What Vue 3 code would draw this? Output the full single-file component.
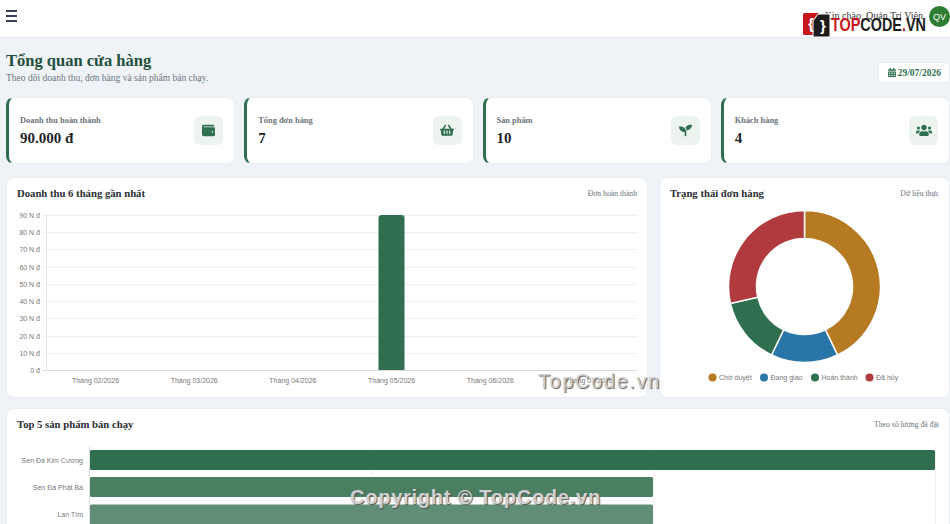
<template>
  <div class="app">
    <header class="topbar">
      <button class="menu-btn" aria-label="Menu">
        <span></span><span></span><span></span>
      </button>
      <div class="user">
        <span class="greeting">Xin chào, Quản Trị Viên</span>
        <span class="avatar">QV</span>
      </div>
    </header>

    <main class="content">
      <div class="page-head">
        <div>
          <h1>Tổng quan cửa hàng</h1>
          <p>Theo dõi doanh thu, đơn hàng và sản phẩm bán chạy.</p>
        </div>
        <div class="date-badge">
          <svg viewBox="0 0 448 512" class="date-icon"><path :d="icons.calendar" /></svg>
          29/07/2026
        </div>
      </div>

      <section class="stats">
        <div v-for="stat in stats" :key="stat.label" class="stat-card">
          <div>
            <div class="stat-label">{{ stat.label }}</div>
            <div class="stat-value">{{ stat.value }}</div>
          </div>
          <div class="stat-icon">
            <svg :viewBox="stat.box" :width="stat.size"><path :d="stat.icon" /></svg>
          </div>
        </div>
      </section>

      <section class="charts">
        <div class="card">
          <div class="card-head">
            <h2>Doanh thu 6 tháng gần nhất</h2>
            <span>Đơn hoàn thành</span>
          </div>
          <svg class="chart" viewBox="6 205 642 193" width="642" height="193">
            <g v-for="(tick, i) in revenueTicks" :key="tick">
              <line x1="42" x2="637" :y1="tickY(i)" :y2="tickY(i)" :stroke="i === 0 ? '#dcdcdc' : '#f0f0f0'" />
              <text x="40" :y="tickY(i) + 2.5" text-anchor="end" class="axis">{{ tick }}</text>
            </g>
            <line x1="46.5" x2="46.5" y1="215" y2="370" stroke="#e6e6e6" />
            <path d="M378.5 370V218a3 3 0 0 1 3-3h20a3 3 0 0 1 3 3v152z" fill="#2f6f4f" />
            <text v-for="(m, i) in months" :key="m" :x="95.5 + i * 98.7" y="383" text-anchor="middle" class="axis">{{ m }}</text>
          </svg>
        </div>

        <div class="card">
          <div class="card-head">
            <h2>Trạng thái đơn hàng</h2>
            <span>Dữ liệu thực</span>
          </div>
          <svg class="chart" viewBox="659 205 291 193" width="291" height="193">
            <path v-for="s in donut" :key="s.label" :d="s.path" :fill="s.color" stroke="#fff" stroke-width="1.5" />
            <g v-for="s in donut" :key="s.label + '-l'">
              <circle :cx="s.dot" cy="377.5" r="4" :fill="s.color" />
              <text :x="s.dot + 6.5" y="380" class="axis">{{ s.label }}</text>
            </g>
          </svg>
        </div>
      </section>

      <section class="card">
        <div class="card-head">
          <h2>Top 5 sản phẩm bán chạy</h2>
          <span>Theo số lượng đã đặt</span>
        </div>
        <svg class="chart" viewBox="6 437 944 120" width="944" height="120">
          <line v-for="x in [371.5, 653.5, 935.5]" :key="x" :x1="x" :x2="x" y1="447" y2="557" stroke="#f0f0f0" />
          <line x1="89.5" x2="89.5" y1="447" y2="557" stroke="#dfdfdf" />
          <g v-for="p in products" :key="p.name">
            <rect x="90" :y="p.y" :width="p.width" height="20" rx="1.5" :fill="p.color" />
            <text x="83" :y="p.y + 12.5" text-anchor="end" class="axis">{{ p.name }}</text>
          </g>
        </svg>
      </section>
    </main>

    <!-- site watermarks sitting on top of the screenshot -->
    <div class="logo">
      <svg class="logo-mark" viewBox="0 0 28 26" width="28" height="26">
        <rect x="0" y="1" width="16" height="22" rx="1.5" fill="#c8161d" />
        <polygon points="15,2 27,2 27,25 10,25 10,9" fill="#1c1c1c" stroke="#fff" stroke-width="1" />
        <text x="8" y="17" text-anchor="middle" class="logo-glyph">{</text>
        <text x="20" y="19" text-anchor="middle" class="logo-glyph">}</text>
      </svg>
      <div class="logo-text"><b>TOP</b>CODE<b>.</b>VN</div>
    </div>
    <div class="mark mark-site">TopCode.vn</div>
    <div class="mark mark-copy">Copyright © TopCode.vn</div>
  </div>
</template>

<script setup>
const icons = {
  calendar: 'M0 464c0 26.5 21.5 48 48 48h352c26.5 0 48-21.5 48-48V192H0v272zm320-196c0-6.6 5.4-12 12-12h40c6.6 0 12 5.4 12 12v40c0 6.6-5.4 12-12 12h-40c-6.6 0-12-5.4-12-12v-40zm0 128c0-6.6 5.4-12 12-12h40c6.6 0 12 5.4 12 12v40c0 6.6-5.4 12-12 12h-40c-6.6 0-12-5.4-12-12v-40zM192 268c0-6.6 5.4-12 12-12h40c6.6 0 12 5.4 12 12v40c0 6.6-5.4 12-12 12h-40c-6.6 0-12-5.4-12-12v-40zm0 128c0-6.6 5.4-12 12-12h40c6.6 0 12 5.4 12 12v40c0 6.6-5.4 12-12 12h-40c-6.6 0-12-5.4-12-12v-40zM64 268c0-6.6 5.4-12 12-12h40c6.6 0 12 5.4 12 12v40c0 6.6-5.4 12-12 12H76c-6.6 0-12-5.4-12-12v-40zm0 128c0-6.6 5.4-12 12-12h40c6.6 0 12 5.4 12 12v40c0 6.6-5.4 12-12 12H76c-6.6 0-12-5.4-12-12v-40zM400 64h-48V16c0-8.8-7.2-16-16-16h-32c-8.8 0-16 7.2-16 16v48H160V16c0-8.8-7.2-16-16-16h-32c-8.8 0-16 7.2-16 16v48H48C21.5 64 0 85.5 0 112v48h448v-48c0-26.5-21.5-48-48-48z',
  wallet: 'M461.2 128H80c-8.84 0-16-7.16-16-16s7.16-16 16-16h384c8.84 0 16-7.16 16-16 0-26.51-21.49-48-48-48H64C28.65 32 0 60.65 0 96v320c0 35.35 28.65 64 64 64h397.2c28.02 0 50.8-21.53 50.8-48V176c0-26.47-22.78-48-50.8-48zM416 340c-17.67 0-32-14.33-32-32s14.33-32 32-32 32 14.33 32 32-14.33 32-32 32z',
  basket: 'M576 216v16c0 13.255-10.745 24-24 24h-8l-26.113 182.788C514.509 462.435 494.257 480 470.37 480H105.63c-23.887 0-44.139-17.565-47.518-41.212L32 256h-8c-13.255 0-24-10.745-24-24v-16c0-13.255 10.745-24 24-24h67.341l106.78-146.821c10.395-14.292 30.407-17.453 44.701-7.058 14.293 10.395 17.453 30.408 7.058 44.701L170.477 192h235.046L326.12 82.821c-10.395-14.292-7.234-34.306 7.059-44.701 14.291-10.395 34.306-7.235 44.701 7.058L484.659 192H552c13.255 0 24 10.745 24 24zM312 392V280c0-13.255-10.745-24-24-24s-24 10.745-24 24v112c0 13.255 10.745 24 24 24s24-10.745 24-24zm112 0V280c0-13.255-10.745-24-24-24s-24 10.745-24 24v112c0 13.255 10.745 24 24 24s24-10.745 24-24zm-224 0V280c0-13.255-10.745-24-24-24s-24 10.745-24 24v112c0 13.255 10.745 24 24 24s24-10.745 24-24z',
  seedling: 'M64 96H0c0 123.7 100.3 224 224 224v144c0 8.8 7.2 16 16 16h32c8.8 0 16-7.2 16-16V320C288 196.3 187.7 96 64 96zm384-64c-84.2 0-157.4 46.5-195.7 115.2 27.7 30.2 48.2 66.9 59 107.6C424 243.1 512 147.9 512 32h-64z',
  users: 'M96 224c35.3 0 64-28.7 64-64s-28.7-64-64-64-64 28.7-64 64 28.7 64 64 64zm448 0c35.3 0 64-28.7 64-64s-28.7-64-64-64-64 28.7-64 64 28.7 64 64 64zm32 32h-64c-17.6 0-33.5 7.1-45.1 18.6 40.3 22.1 68.9 62 75.1 109.4h66c17.7 0 32-14.3 32-32v-32c0-35.3-28.7-64-64-64zm-256 0c61.9 0 112-50.1 112-112S381.9 32 320 32 208 82.1 208 144s50.1 112 112 112zm76.8 32h-8.3c-20.8 10-43.9 16-68.5 16s-47.6-6-68.5-16h-8.3C179.6 288 128 339.6 128 403.2V432c0 26.5 21.5 48 48 48h288c26.5 0 48-21.5 48-48v-28.8c0-63.6-51.6-115.2-115.2-115.2zm-223.7-13.4C161.5 263.1 145.6 256 128 256H64c-35.3 0-64 28.7-64 64v32c0 17.7 14.3 32 32 32h65.9c6.3-47.4 34.9-87.3 75.2-109.4z'
}

const stats = [
  { label: 'Doanh thu hoàn thành', value: '90.000 đ', icon: icons.wallet, box: '0 0 512 512', size: 13 },
  { label: 'Tổng đơn hàng', value: '7', icon: icons.basket, box: '0 0 576 512', size: 14 },
  { label: 'Sản phẩm', value: '10', icon: icons.seedling, box: '0 0 512 512', size: 13 },
  { label: 'Khách hàng', value: '4', icon: icons.users, box: '0 0 640 512', size: 16 }
]

const revenueTicks = ['0 đ', '10 N đ', '20 N đ', '30 N đ', '40 N đ', '50 N đ', '60 N đ', '70 N đ', '80 N đ', '90 N đ']
const tickY = (i) => Math.round(370 - i * (155 / 9)) + 0.5

const months = ['Tháng 02/2026', 'Tháng 03/2026', 'Tháng 04/2026', 'Tháng 05/2026', 'Tháng 06/2026', 'Tháng 07/2026']

function arc(start, end) {
  const cx = 804.5
  const cy = 286.5
  const R = 76
  const r = 48
  const pt = (rad, a) => {
    const t = ((a - 90) * Math.PI) / 180
    return `${(cx + rad * Math.cos(t)).toFixed(2)} ${(cy + rad * Math.sin(t)).toFixed(2)}`
  }
  const large = end - start > 180 ? 1 : 0
  return `M${pt(R, start)}A${R} ${R} 0 ${large} 1 ${pt(R, end)}L${pt(r, end)}A${r} ${r} 0 ${large} 0 ${pt(r, start)}Z`
}

const statusData = [
  { label: 'Chờ duyệt', count: 3, color: '#b57a22', dot: 712.5 },
  { label: 'Đang giao', count: 1, color: '#2a75a8', dot: 764 },
  { label: 'Hoàn thành', count: 1, color: '#2f6f4f', dot: 815 },
  { label: 'Đã hủy', count: 2, color: '#b03a3e', dot: 869.5 }
]
let angle = 0
const donut = statusData.map((s) => {
  const start = angle
  angle += (s.count / 7) * 360
  return { ...s, path: arc(start, angle) }
})

const products = [
  { name: 'Sen Đá Kim Cương', y: 451, width: 845, color: '#2f6f4f' },
  { name: 'Sen Đá Phật Bà', y: 478, width: 563, color: '#4a7f62' },
  { name: 'Lan Tím', y: 505.5, width: 563, color: '#5f8d75' }
]
</script>

<style>
body {
  margin: 0;
  overflow: hidden;
}
</style>

<style scoped>
.app {
  position: relative;
  width: 950px;
  height: 524px;
  overflow: hidden;
  background: #eff3f7;
  font-family: "Liberation Serif", serif;
  color: #212529;
}

.topbar {
  display: flex;
  justify-content: space-between;
  align-items: flex-start;
  height: 37px;
  box-sizing: content-box;
  background: #fff;
  border-bottom: 1px solid #e3e7ec;
}

.menu-btn {
  display: flex;
  flex-direction: column;
  gap: 3px;
  width: 11px;
  margin: 10px 0 0 6px;
  padding: 0;
  border: 0;
  background: none;
}

.menu-btn span {
  display: block;
  height: 2px;
  background: #343f4e;
}

.user {
  display: flex;
  align-items: flex-start;
  gap: 6px;
}

.greeting {
  margin-top: 10px;
  font-size: 10px;
  color: #333;
}

.avatar {
  display: flex;
  align-items: center;
  justify-content: center;
  width: 21px;
  height: 21px;
  margin-top: 6px;
  border-radius: 50%;
  background: #2e7d32;
  color: #fff;
  font-family: "Liberation Sans", sans-serif;
  font-size: 9px;
}

.content {
  padding: 14px 0 0 6px;
}

.page-head {
  display: flex;
  justify-content: space-between;
  align-items: flex-end;
  margin-bottom: 13px;
}

h1 {
  margin: 0;
  font-size: 16.5px;
  line-height: 18px;
  font-weight: 700;
  color: #234f3b;
}

.page-head p {
  margin: 2px 0 0;
  font-size: 9.5px;
  line-height: 12px;
  color: #6c757d;
}

.date-badge {
  display: flex;
  align-items: center;
  gap: 2px;
  height: 21px;
  margin-bottom: 1px;
  padding: 0 8px 0 9px;
  border: 1px solid #e8edf2;
  border-radius: 4px;
  background: #fff;
  font-size: 9.5px;
  font-weight: 700;
  color: #2f6f4f;
  box-sizing: border-box;
}

.date-icon {
  width: 8px;
  height: 9px;
  fill: #2f6f4f;
}

.stats {
  display: grid;
  grid-template-columns: repeat(4, 1fr);
  gap: 9px;
  margin-bottom: 13px;
}

.stat-card {
  display: flex;
  justify-content: space-between;
  align-items: center;
  height: 67px;
  padding: 0 11px;
  border: 1px solid #e8edf2;
  border-left: 3px solid #2f6f4f;
  border-radius: 8px;
  background: #fff;
  box-sizing: border-box;
}

.stat-label {
  font-size: 8.4px;
  font-weight: 700;
  line-height: 11px;
  color: #6c757d;
}

.stat-value {
  margin-top: 4px;
  font-size: 15px;
  font-weight: 700;
  line-height: 17px;
  color: #212529;
}

.stat-icon {
  display: flex;
  align-items: center;
  justify-content: center;
  width: 29px;
  height: 29px;
  border-radius: 6px;
  background: #edf4f0;
}

.stat-icon svg {
  fill: #2f6f4f;
}

.charts {
  display: grid;
  grid-template-columns: 642fr 291fr;
  gap: 11px;
  margin-bottom: 10px;
}

.card {
  border: 1px solid #e8edf2;
  border-radius: 8px;
  background: #fff;
  box-sizing: border-box;
}

.card-head {
  display: flex;
  justify-content: space-between;
  align-items: center;
  height: 27px;
  padding: 3px 10px 0;
  box-sizing: border-box;
}

.card-head h2 {
  margin: 0;
  font-size: 10.7px;
  font-weight: 700;
  color: #2b2f33;
}

.card-head span {
  font-size: 7.7px;
  color: #6c757d;
}

.chart {
  display: block;
  margin: 0 -1px -1px;
}

.axis {
  font-family: "Liberation Sans", sans-serif;
  font-size: 7px;
  fill: #777;
}

.logo {
  position: absolute;
  left: 803px;
  top: 12px;
  display: flex;
  align-items: flex-start;
}

.logo-mark {
  display: block;
  flex: none;
}

.logo-glyph {
  font-family: "Liberation Sans", sans-serif;
  font-size: 15px;
  font-weight: 700;
  fill: #fff;
}

.logo-text {
  margin: 3px 0 0;
  font: 700 18px/20px "Liberation Sans", sans-serif;
  color: #1c1c1c;
  white-space: nowrap;
  transform: scaleX(0.8);
  transform-origin: left center;
}

.logo-text b {
  color: #c8161d;
}

.mark {
  position: absolute;
  font-family: "Liberation Sans", sans-serif;
  white-space: nowrap;
  color: #d0d0d0;
  text-shadow: 1px 1px 1px #555;
}

.mark-site {
  left: 538px;
  top: 370px;
  font-size: 20px;
  letter-spacing: 1.6px;
}

.mark-copy {
  left: 350px;
  top: 486px;
  font-size: 20px;
  font-weight: 700;
  letter-spacing: 0.75px;
}
</style>
